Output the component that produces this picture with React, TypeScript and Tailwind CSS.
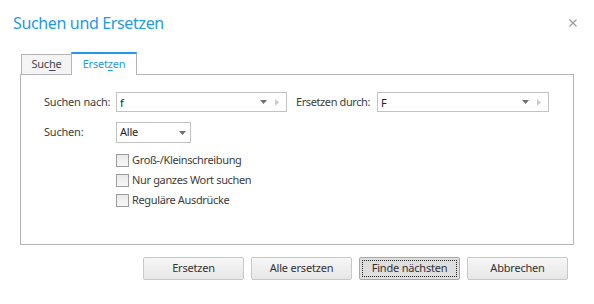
import React from "react";

const font = { fontFamily: '"Noto Sans", "Open Sans", sans-serif' };

function DownArrow({ color = "#6f6f6f" }: { color?: string }) {
  return (
    <svg width="7" height="4" viewBox="0 0 7 4" className="shrink-0">
      <polygon points="0,0 7,0 3.5,4" fill={color} />
    </svg>
  );
}

function RightArrow() {
  return (
    <svg width="4" height="7" viewBox="0 0 4 7" className="shrink-0">
      <polygon points="0,0 4,3.5 0,7" fill="#cbcbcb" />
    </svg>
  );
}

function ComboInput({ value, width }: { value: string; width: string }) {
  return (
    <div
      className={`flex h-[20px] ${width} items-center border border-[#c2c2c2] bg-white pl-[3px] pr-[7px]`}
    >
      <span className="flex-1 leading-none text-[#222]">{value}</span>
      <DownArrow />
      <span className="ml-[8px] flex">
        <RightArrow />
      </span>
    </div>
  );
}

function Check({ label }: { label: string }) {
  return (
    <div className="flex h-[13px] items-center">
      <div className="h-[13px] w-[13px] border border-[#9c9c9c] bg-linear-to-b from-[#e9e9e9] to-[#f7f7f7]" />
      <span className="ml-[3px] tracking-[-0.35px] text-[#3c3c3c]">{label}</span>
    </div>
  );
}

function Btn({ label, focused = false }: { label: string; focused?: boolean }) {
  return (
    <button
      className={
        focused
          ? "flex h-[23px] w-[101px] items-center justify-center rounded-[2px] border border-[#a9a9a9] bg-[#dedede] text-[#333] outline-1 outline-dotted outline-[#222] -outline-offset-4"
          : "flex h-[23px] w-[101px] items-center justify-center rounded-[2px] border border-[#c8c8c8] bg-linear-to-b from-[#f6f6f6] to-[#e7e7e7] text-[#333]"
      }
    >
      {label}
    </button>
  );
}

export default function App() {
  return (
    <div
      className="h-[304px] w-[594px] overflow-hidden bg-white text-[11px] tracking-[-0.2px]"
      style={font}
    >
      {/* Title bar */}
      <div className="flex items-center justify-between pl-[13px] pr-[17px] pt-[13px]">
        <span className="text-[16px] leading-[20px] tracking-[-0.35px] text-[#1f9ae5]">
          Suchen und Ersetzen
        </span>
        <svg width="8" height="8" viewBox="0 0 8 8">
          <path d="M0.5 0.5 L7.5 7.5 M7.5 0.5 L0.5 7.5" stroke="#9a9a9a" strokeWidth="1.2" />
        </svg>
      </div>

      {/* Tabs + panel */}
      <div className="ml-[20px] mt-[19px] w-[554px]">
        <div className="flex h-[22px] items-end pl-px">
          <div className="flex h-[20px] w-[50px] items-center justify-center border-l border-t border-[#b5b5b5] bg-[#f4f4f4] text-[#444]">
            <span>
              Suc<span className="underline underline-offset-2">h</span>e
            </span>
          </div>
          <div className="relative z-10 -mb-px flex h-[23px] w-[66px] items-center justify-center border-x border-t-2 border-x-[#b5b5b5] border-t-[#1f9ae5] bg-white text-[#1f9ae5]">
            <span>
              Erset<span className="underline underline-offset-2">z</span>en
            </span>
          </div>
        </div>

        <div className="h-[171px] border border-[#b5b5b5] pl-[23px] pt-[17px]">
          {/* Row 1 */}
          <div className="flex h-[20px] items-center">
            <span className="w-[72px] text-[#3c3c3c]">Suchen nach:</span>
            <ComboInput value="f" width="w-[171px]" />
            <span className="ml-[9px] w-[81px] tracking-[-0.4px] text-[#3c3c3c]">
              Ersetzen durch:
            </span>
            <ComboInput value="F" width="w-[172px]" />
          </div>

          {/* Row 2 */}
          <div className="mt-[10px] flex h-[21px] items-center">
            <span className="w-[72px] text-[#3c3c3c]">Suchen:</span>
            <div className="flex h-[21px] w-[75px] items-center border border-[#c2c2c2] bg-white pl-[3px] pr-[4px]">
              <span className="flex-1 text-[#222]">Alle</span>
              <DownArrow />
            </div>
          </div>

          {/* Checkboxes */}
          <div className="ml-[72px] mt-[11px] flex flex-col gap-[7px]">
            <Check label="Groß-/Kleinschreibung" />
            <Check label="Nur ganzes Wort suchen" />
            <Check label="Reguläre Ausdrücke" />
          </div>
        </div>
      </div>

      {/* Buttons */}
      <div className="mt-[12px] flex justify-end gap-[7px] pr-[26px]">
        <Btn label="Ersetzen" />
        <Btn label="Alle ersetzen" />
        <Btn label="Finde nächsten" focused />
        <Btn label="Abbrechen" />
      </div>
    </div>
  );
}
